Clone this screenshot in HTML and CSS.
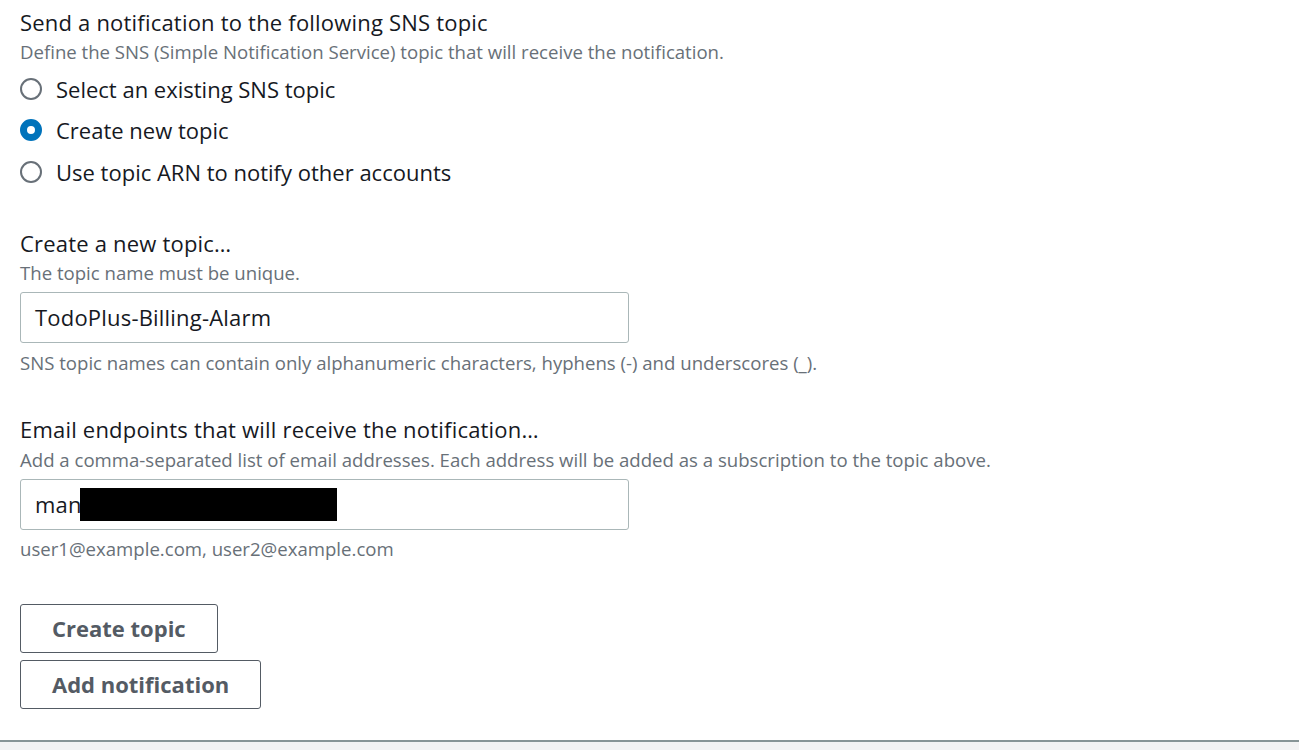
FILE: index.html
```html
<!DOCTYPE html>
<html lang="en">
<head>
  <meta charset="UTF-8" />
  <title>SNS notification</title>
  <link rel="stylesheet" href="styles.css">
</head>
<body>
  <div class="page">
    <div class="field">
      <div class="label">Send a notification to the following SNS topic</div>
      <div class="desc">Define the SNS (Simple Notification Service) topic that will receive the notification.</div>
      <div class="radios">
        <label class="radio"><span class="dot"></span>Select an existing SNS topic</label>
        <label class="radio"><span class="dot checked"></span>Create new topic</label>
        <label class="radio"><span class="dot"></span>Use topic ARN to notify other accounts</label>
      </div>
    </div>

    <div class="field topic">
      <div class="label">Create a new topic…</div>
      <div class="desc">The topic name must be unique.</div>
      <div class="input">TodoPlus-Billing-Alarm</div>
      <div class="hint">SNS topic names can contain only alphanumeric characters, hyphens (-) and underscores (_).</div>
    </div>

    <div class="field email">
      <div class="label">Email endpoints that will receive the notification…</div>
      <div class="desc">Add a comma-separated list of email addresses. Each address will be added as a subscription to the topic above.</div>
      <div class="input">man<span class="redact"></span></div>
      <div class="hint">user1@example.com, user2@example.com</div>
    </div>

    <div class="actions">
      <button class="btn">Create topic</button>
      <button class="btn">Add notification</button>
    </div>
  </div>
  <div class="footer"></div>
</body>
</html>
```

FILE: styles.css
```css
body {
  margin: 0;
  background-color: #fff;
  font-family: "Open Sans", "Liberation Sans", sans-serif;
  color: #16191f;
}

.page {
  height: 740px;
  padding: 8px 20px 0;
  box-sizing: border-box;
}

.label {
  font-size: 22px;
  line-height: 28px;
  letter-spacing: 0.2px;
}

.desc {
  margin-top: 4px;
  font-size: 18.6px;
  line-height: 24px;
  color: #687078;
}

.radios {
  margin-top: 4px;
}

.radio {
  display: flex;
  align-items: center;
  height: 41.5px;
  font-size: 22px;
}

.dot {
  width: 18px;
  height: 18px;
  border: 2px solid #687078;
  border-radius: 50%;
  margin-right: 14px;
  box-sizing: content-box;
}

.dot.checked {
  width: 8px;
  height: 8px;
  border: 7px solid #0073bb;
}

.topic {
  margin-top: 36px;
}

.email {
  margin-top: 40px;
}

.email .desc {
  margin-top: 5px;
}

.input {
  width: 609px;
  height: 51px;
  margin-top: 7px;
  padding: 0 14px;
  box-sizing: border-box;
  border: 1px solid #aab7b8;
  border-radius: 3px;
  display: flex;
  align-items: center;
  font-size: 22px;
  letter-spacing: 0.2px;
}

.redact {
  display: inline-block;
  width: 257px;
  height: 33px;
  margin-left: -2px;
  background-color: #000;
}

.hint {
  margin-top: 8px;
  font-size: 18.6px;
  line-height: 24px;
  color: #687078;
}

.email .hint {
  margin-top: 7px;
}

.actions {
  margin-top: 43px;
  display: flex;
  flex-direction: column;
  align-items: flex-start;
  gap: 7px;
}

.btn {
  height: 49px;
  padding: 0 31px;
  font-family: "Open Sans", "Liberation Sans", sans-serif;
  font-size: 22px;
  font-weight: bold;
  color: #545b64;
  background-color: #fff;
  border: 1px solid #545b64;
  border-radius: 3px;
}

.footer {
  height: 10px;
  background-color: #f2f3f3;
  border-top: 2px solid #879596;
  box-sizing: border-box;
}
```
